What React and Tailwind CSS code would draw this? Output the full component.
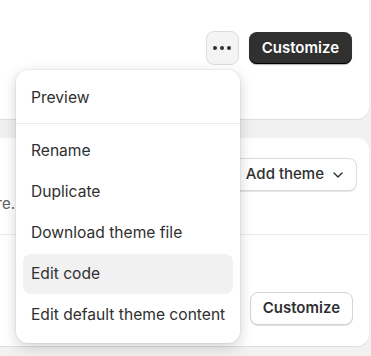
import { ChevronDown } from 'lucide-react';

const items = [
  { label: 'Rename' },
  { label: 'Duplicate' },
  { label: 'Download theme file' },
  { label: 'Edit code', active: true },
  { label: 'Edit default theme content' },
];

export default function App() {
  return (
    <div
      className="relative w-[371px] h-[356px] overflow-hidden bg-[#f1f1f1] text-[#303030]"
      style={{ fontFamily: 'Inter, "Noto Sans", sans-serif' }}
    >
      {/* Top card */}
      <div className="-ml-4 mr-[2px] -mt-3 h-[131px] rounded-xl bg-white shadow-[0_1px_0_rgba(0,0,0,0.08)]">
        <div className="flex justify-end items-center gap-[10px] pt-[43px] pr-[17px]">
          <button className="w-[33px] h-[34px] rounded-lg bg-[#f4f4f4] border border-[#dcdcdc] flex items-center justify-center gap-[3px]">
            <span className="w-[4px] h-[4px] rounded-full bg-[#303030]" />
            <span className="w-[4px] h-[4px] rounded-full bg-[#303030]" />
            <span className="w-[4px] h-[4px] rounded-full bg-[#303030]" />
          </button>
          <button className="h-[32px] px-[13px] rounded-lg bg-[#303030] text-white text-[15px] font-semibold shadow-[inset_0_-1px_0_#000,0_1px_1px_rgba(0,0,0,0.3)]">
            Customize
          </button>
        </div>
      </div>

      {/* Second card */}
      <div className="-ml-4 mr-[2px] mt-[19px] h-[208px] rounded-xl bg-white shadow-[0_1px_0_rgba(0,0,0,0.08)]">
        <div className="h-[96px] flex flex-col">
          <div className="flex justify-end pt-[20px] pr-[12px]">
            <button className="h-[33px] pl-[12px] pr-[10px] rounded-lg border border-[#dcdcdc] bg-white text-[15px] font-medium flex items-center gap-[6px] shadow-[0_1px_0_rgba(0,0,0,0.1)]">
              Add theme
              <ChevronDown size={16} strokeWidth={2} />
            </button>
          </div>
          <div className="ml-4 w-[15px] mt-[2px] flex justify-end">
            <span className="whitespace-nowrap text-[15px] text-[#616161]">Build your online store.</span>
          </div>
        </div>
        <div className="h-px bg-[#ebebeb]" />
        <div className="flex justify-end pt-[57px] pr-[16px]">
          <button className="h-[33px] px-[12px] rounded-lg border border-[#d4d4d4] bg-white text-[15px] font-semibold shadow-[0_1px_0_rgba(0,0,0,0.12)]">
            Customize
          </button>
        </div>
      </div>

      {/* Popover menu */}
      <div className="absolute left-[16px] top-[70px] w-[224px] rounded-xl bg-white shadow-[0_4px_14px_rgba(0,0,0,0.18),0_0_0_1px_rgba(0,0,0,0.04)] text-[15.6px] whitespace-nowrap">
        <div className="px-[7px] pt-[8px] pb-[5px]">
          <div className="h-[40px] flex items-center px-[8px] rounded-lg">Preview</div>
        </div>
        <div className="h-px bg-[#ebebeb]" />
        <div className="px-[7px] pt-[7px] pb-[7px]">
          {items.map((it) => (
            <div
              key={it.label}
              className={`h-[40px] mb-[1px] flex items-center px-[8px] rounded-lg ${it.active ? 'bg-[#f1f1f1]' : ''}`}
            >
              {it.label}
            </div>
          ))}
        </div>
      </div>
    </div>
  );
}
